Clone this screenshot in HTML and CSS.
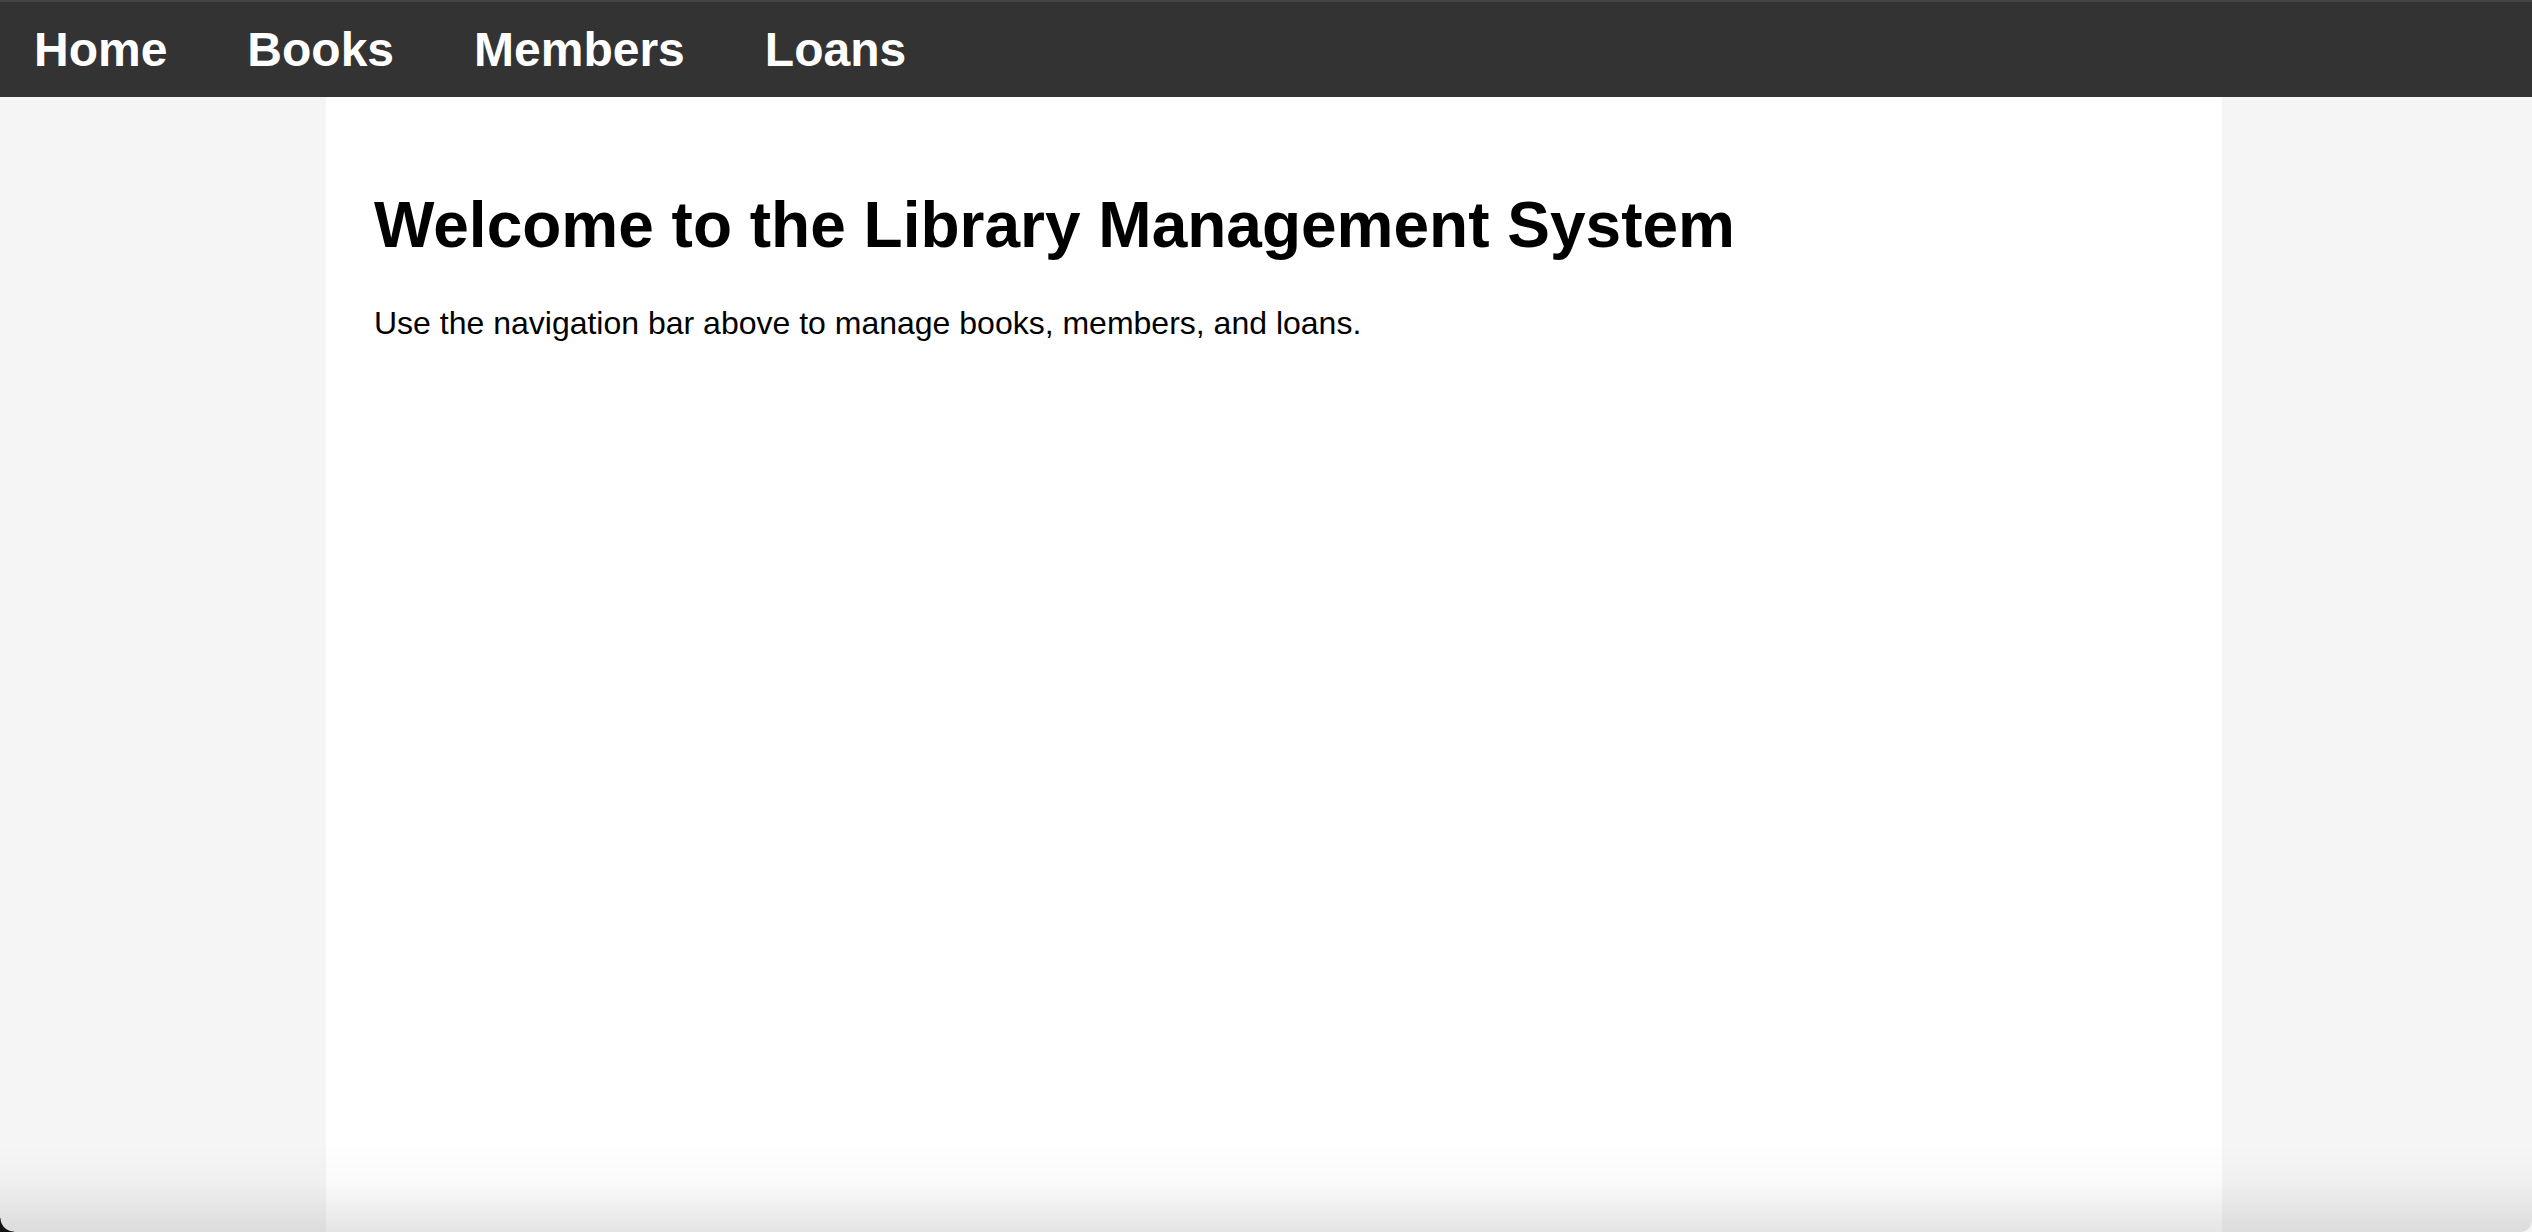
FILE: index.html
```html
<!DOCTYPE html>
<html lang="en">
<head>
<meta charset="utf-8">
<title>Library Management System</title>
<link rel="stylesheet" href="styles.css">
</head>
<body>
<nav class="navbar">
  <a class="nav-link" href="#">Home</a>
  <a class="nav-link" href="#">Books</a>
  <a class="nav-link" href="#">Members</a>
  <a class="nav-link" href="#">Loans</a>
</nav>
<div class="page">
  <main class="container">
    <h1 class="title">Welcome to the Library Management System</h1>
    <p class="intro">Use the navigation bar above to manage books, members, and loans.</p>
  </main>
</div>
<div class="window-shadow"></div>
<div class="corner-left"></div>
</body>
</html>
```
FILE: styles.css
```css
html, body {
  margin: 0;
  padding: 0;
  height: 100%;
}
body {
  background: #f5f5f5;
  font-family: "Liberation Sans", Arial, sans-serif;
  display: flex;
  flex-direction: column;
  overflow: hidden;
}
.navbar {
  background: #333333;
  border-top: 2px solid #444444;
  height: 95px;
  display: flex;
  align-items: center;
  padding-left: 34px;
  gap: 80px;
  flex-shrink: 0;
}
.nav-link {
  color: #ffffff;
  text-decoration: none;
  font-weight: bold;
  font-size: 48px;
  line-height: 1;
}
.page {
  flex: 1;
  display: flex;
  padding-left: 326px;
}
.container {
  width: 1896px;
  background: #ffffff;
  padding: 48px 48px;
  box-sizing: border-box;
}
.title {
  font-size: 64px;
  font-weight: bold;
  margin: 43px 0;
  color: #000;
}
.intro {
  font-size: 32px;
  margin: 32px 0;
  color: #000;
}
.window-shadow {
  position: fixed;
  left: 0;
  right: 0;
  bottom: 0;
  height: 90px;
  pointer-events: none;
  background: linear-gradient(to bottom, rgba(0,0,0,0) 0%, rgba(0,0,0,0.02) 45%, rgba(0,0,0,0.1) 100%);
  border-bottom-left-radius: 12px;
  border-bottom-right-radius: 12px;
}
.corner-left {
  position: fixed;
  left: 0;
  bottom: 0;
  width: 14px;
  height: 14px;
  background: radial-gradient(circle at 14px 0, transparent 13px, #111 14px);
  pointer-events: none;
}
```
